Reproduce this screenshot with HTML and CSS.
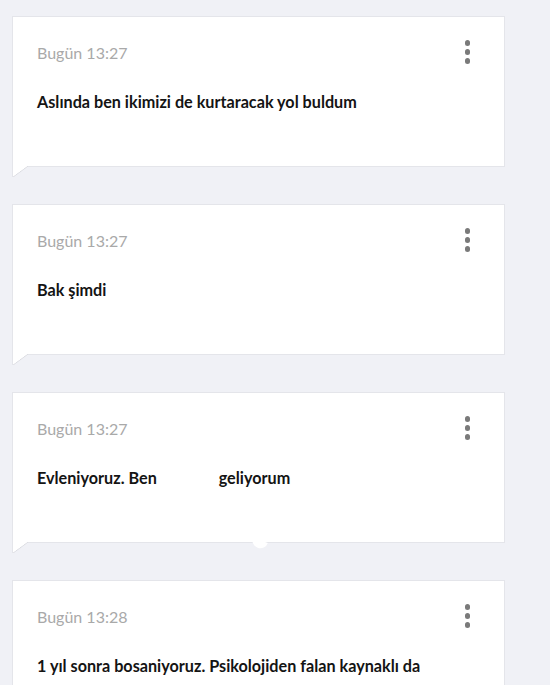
FILE: index.html
```html
<!DOCTYPE html>
<html lang="tr">
<head>
<meta charset="utf-8">
<link rel="stylesheet" href="styles.css">
</head>
<body>
<div class="feed">
  <div class="card">
    <div class="head">
      <span class="time">Bugün 13:27</span>
      <span class="menu"><i></i><i></i><i></i></span>
    </div>
    <p class="msg">Aslında ben ikimizi de kurtaracak yol buldum</p>
  </div>
  <div class="card">
    <div class="head">
      <span class="time">Bugün 13:27</span>
      <span class="menu"><i></i><i></i><i></i></span>
    </div>
    <p class="msg">Bak şimdi</p>
  </div>
  <div class="card">
    <div class="head">
      <span class="time">Bugün 13:27</span>
      <span class="menu"><i></i><i></i><i></i></span>
    </div>
    <p class="msg">Evleniyoruz. Ben <span class="blank"></span>geliyorum</p>
    <span class="blob"></span>
  </div>
  <div class="card">
    <div class="head">
      <span class="time">Bugün 13:28</span>
      <span class="menu"><i></i><i></i><i></i></span>
    </div>
    <p class="msg">1 yıl sonra bosaniyoruz. Psikolojiden falan kaynaklı da</p>
  </div>
</div>
</body>
</html>
```

FILE: styles.css
```css
html, body {
  margin: 0;
  padding: 0;
  background: #f0f1f6;
  overflow: hidden;
}
body {
  font-family: Lato, "Noto Sans", sans-serif;
}
.feed {
  display: flex;
  flex-direction: column;
  gap: 37px;
  padding: 16px 0 0 12px;
  width: 493px;
}
.card {
  position: relative;
  background: #fff;
  border: 1px solid #e4e5ea;
  height: 149px;
  padding: 0 0 0 24px;
}
.card::after {
  content: "";
  position: absolute;
  left: -1px;
  top: 100%;
  width: 16px;
  height: 11px;
  background: linear-gradient(to bottom right, #fff calc(50% - 0.6px), #dcdde2 50%, transparent calc(50% + 0.9px));
  border-left: 1px solid #e4e5ea;
  box-sizing: border-box;
}
.card::before {
  content: "";
  position: absolute;
  left: 0;
  top: 100%;
  width: 13px;
  height: 1px;
  background: #fff;
  z-index: 1;
}
.head {
  display: flex;
  justify-content: space-between;
  align-items: flex-start;
  padding-top: 26px;
  padding-right: 34px;
}
.time {
  font-size: 16px;
  line-height: 20px;
  color: #a9a9a9;
}
.menu {
  display: flex;
  flex-direction: column;
  gap: 3.5px;
  margin-top: -3px;
}
.menu i {
  display: block;
  width: 5.5px;
  height: 5.5px;
  border-radius: 50%;
  background: #7a7a7a;
}
.msg {
  margin: 28px 0 0;
  font-size: 16.2px;
  line-height: 20px;
  font-weight: 700;
  color: #141414;
}
.blank {
  display: inline-block;
  width: 58px;
}
.blob {
  position: absolute;
  left: 238px;
  top: 100%;
  margin-top: -2px;
  width: 16px;
  height: 8px;
  border-radius: 0 0 8px 8px;
  background: #fff;
  transform: rotate(20deg);
}
```
